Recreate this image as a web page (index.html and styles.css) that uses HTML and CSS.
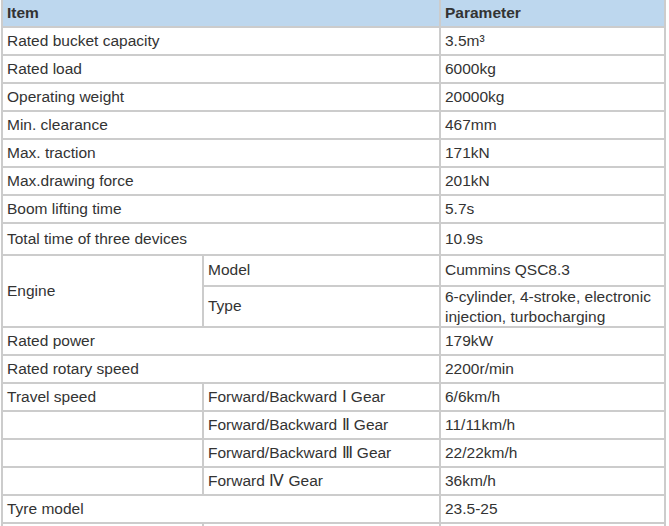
FILE: index.html
```html
<!DOCTYPE html>
<html>
<head>
<meta charset="utf-8">
<link rel="stylesheet" href="styles.css">
</head>
<body>
<table class="spec">
  <colgroup>
    <col class="c1"><col class="c2"><col class="c3">
  </colgroup>
  <thead>
    <tr class="head"><th colspan="2">Item</th><th>Parameter</th></tr>
  </thead>
  <tbody>
    <tr><td colspan="2">Rated bucket capacity</td><td>3.5m³</td></tr>
    <tr><td colspan="2">Rated load</td><td>6000kg</td></tr>
    <tr><td colspan="2">Operating weight</td><td>20000kg</td></tr>
    <tr><td colspan="2">Min. clearance</td><td>467mm</td></tr>
    <tr><td colspan="2">Max. traction</td><td>171kN</td></tr>
    <tr><td colspan="2">Max.drawing force</td><td>201kN</td></tr>
    <tr><td colspan="2">Boom lifting time</td><td>5.7s</td></tr>
    <tr class="tall"><td colspan="2">Total time of three devices</td><td>10.9s</td></tr>
    <tr class="model"><td rowspan="2">Engine</td><td>Model</td><td>Cummins QSC8.3</td></tr>
    <tr class="auto"><td>Type</td><td class="wrap">6-cylinder, 4-stroke, electronic injection, turbocharging</td></tr>
    <tr><td colspan="2">Rated power</td><td>179kW</td></tr>
    <tr><td colspan="2">Rated rotary speed</td><td>2200r/min</td></tr>
    <tr><td>Travel speed</td><td>Forward/Backward Ⅰ Gear</td><td>6/6km/h</td></tr>
    <tr><td></td><td>Forward/Backward Ⅱ Gear</td><td>11/11km/h</td></tr>
    <tr><td></td><td>Forward/Backward Ⅲ Gear</td><td>22/22km/h</td></tr>
    <tr><td></td><td>Forward Ⅳ Gear</td><td>36km/h</td></tr>
    <tr><td colspan="2">Tyre model</td><td>23.5-25</td></tr>
    <tr><td></td><td></td><td></td></tr>
  </tbody>
</table>
</body>
</html>
```

FILE: styles.css
```css
html, body {
  margin: 0;
  padding: 0;
  background: #fff;
}

.spec {
  margin: 0 0 0 1px;
  border-collapse: separate;
  border-spacing: 0;
  table-layout: fixed;
  width: 665px;
  border-left: 2px solid #cccccc;
  font-family: "Liberation Sans", Arial, sans-serif;
  font-size: 15.5px;
  line-height: 18.5px;
  color: #333333;
}

.c1 { width: 201px; }
.c2 { width: 237px; }
.c3 { width: 225px; }

.spec th,
.spec td {
  border-right: 2px solid #cccccc;
  border-bottom: 2px solid #cccccc;
  padding: 1px 3px 1px 4px;
  text-align: left;
  vertical-align: middle;
  overflow: hidden;
}

.spec td.wrap {
  line-height: 19.5px;
  padding-top: 0;
  padding-bottom: 0;
}

.spec th {
  background: #bdd7ee;
  font-weight: bold;
  color: #333333;
}

.spec tr { height: 28px; }
.spec tr.tall { height: 32px; }
.spec tr.model { height: 31px; }
.spec tr.auto { height: auto; }
```
